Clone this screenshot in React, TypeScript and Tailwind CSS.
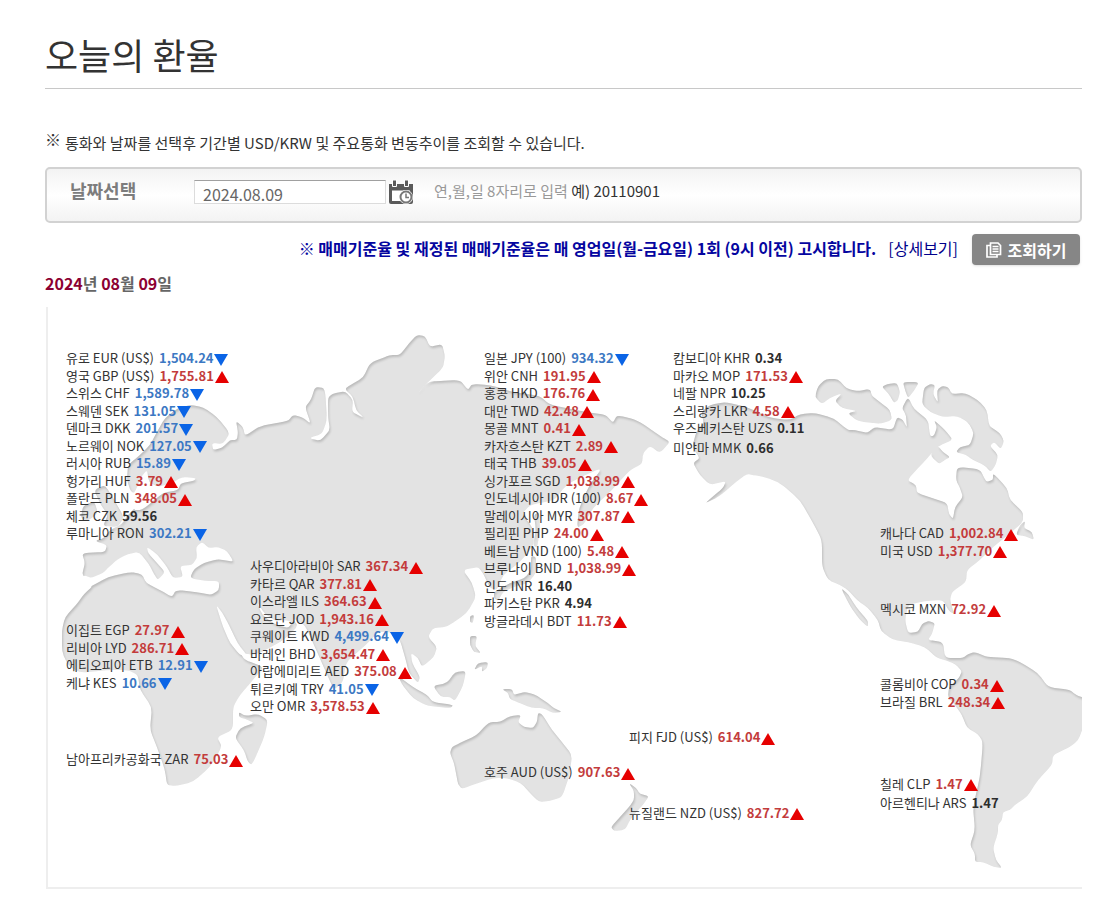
import { useState } from 'react';

type Trend = 'up' | 'down' | 'flat';
type Rate = [name: string, value: string, trend: Trend];

interface Region {
  x: number;
  y: number;
  rates: Rate[];
}

const MAP = { x: 48, y: 307, width: 1034, height: 580 };

const regions: Region[] = [
  {
    x: 66,
    y: 349,
    rates: [
      ['유로 EUR (US$)', '1,504.24', 'down'],
      ['영국 GBP (US$)', '1,755.81', 'up'],
      ['스위스 CHF', '1,589.78', 'down'],
      ['스웨덴 SEK', '131.05', 'down'],
      ['덴마크 DKK', '201.57', 'down'],
      ['노르웨이 NOK', '127.05', 'down'],
      ['러시아 RUB', '15.89', 'down'],
      ['헝가리 HUF', '3.79', 'up'],
      ['폴란드 PLN', '348.05', 'up'],
      ['체코 CZK', '59.56', 'flat'],
      ['루마니아 RON', '302.21', 'down'],
    ],
  },
  {
    x: 250,
    y: 557,
    rates: [
      ['사우디아라비아 SAR', '367.34', 'up'],
      ['카타르 QAR', '377.81', 'up'],
      ['이스라엘 ILS', '364.63', 'up'],
      ['요르단 JOD', '1,943.16', 'up'],
      ['쿠웨이트 KWD', '4,499.64', 'down'],
      ['바레인 BHD', '3,654.47', 'up'],
      ['아랍에미리트 AED', '375.08', 'up'],
      ['튀르키예 TRY', '41.05', 'down'],
      ['오만 OMR', '3,578.53', 'up'],
    ],
  },
  {
    x: 66,
    y: 621,
    rates: [
      ['이집트 EGP', '27.97', 'up'],
      ['리비아 LYD', '286.71', 'up'],
      ['에티오피아 ETB', '12.91', 'down'],
      ['케냐 KES', '10.66', 'down'],
    ],
  },
  { x: 66, y: 750, rates: [['남아프리카공화국 ZAR', '75.03', 'up']] },
  {
    x: 484,
    y: 349,
    rates: [
      ['일본 JPY (100)', '934.32', 'down'],
      ['위안 CNH', '191.95', 'up'],
      ['홍콩 HKD', '176.76', 'up'],
      ['대만 TWD', '42.48', 'up'],
      ['몽골 MNT', '0.41', 'up'],
      ['카자흐스탄 KZT', '2.89', 'up'],
      ['태국 THB', '39.05', 'up'],
      ['싱가포르 SGD', '1,038.99', 'up'],
      ['인도네시아 IDR (100)', '8.67', 'up'],
      ['말레이시아 MYR', '307.87', 'up'],
      ['필리핀 PHP', '24.00', 'up'],
      ['베트남 VND (100)', '5.48', 'up'],
      ['브루나이 BND', '1,038.99', 'up'],
      ['인도 INR', '16.40', 'flat'],
      ['파키스탄 PKR', '4.94', 'flat'],
      ['방글라데시 BDT', '11.73', 'up'],
    ],
  },
  {
    x: 673,
    y: 349,
    rates: [
      ['캄보디아 KHR', '0.34', 'flat'],
      ['마카오 MOP', '171.53', 'up'],
      ['네팔 NPR', '10.25', 'flat'],
      ['스리랑카 LKR', '4.58', 'up'],
      ['우즈베키스탄 UZS', '0.11', 'flat'],
    ],
  },
  { x: 673, y: 439, rates: [['미얀마 MMK', '0.66', 'flat']] },
  {
    x: 880,
    y: 524,
    rates: [
      ['캐나다 CAD', '1,002.84', 'up'],
      ['미국 USD', '1,377.70', 'up'],
    ],
  },
  { x: 880, y: 600, rates: [['멕시코 MXN', '72.92', 'up']] },
  {
    x: 880,
    y: 675,
    rates: [
      ['콜롬비아 COP', '0.34', 'up'],
      ['브라질 BRL', '248.34', 'up'],
    ],
  },
  { x: 880, y: 775, rates: [['칠레 CLP', '1.47', 'up']] },
  { x: 880, y: 794, rates: [['아르헨티나 ARS', '1.47', 'flat']] },
  { x: 629, y: 728, rates: [['피지 FJD (US$)', '614.04', 'up']] },
  { x: 484, y: 763, rates: [['호주 AUD (US$)', '907.63', 'up']] },
  { x: 629, y: 804, rates: [['뉴질랜드 NZD (US$)', '827.72', 'up']] },
];

// Coastlines, clockwise, one "x,y" pair per vertex
const lands = [
  // Europe, Asia and Africa
  '190,405 178,408 165,418 158,430 150,445 140,455 128,465 127,480 131,492 140,494 138,505 128,515 122,524 110,530 104,538 95,541 107,545 105,552 82,553 85,563 82,575 90,582 92,587 85,593 76,605 65,617 62,630 62,652 68,665 80,673 107,670 128,670 138,675 140,690 152,707 150,730 157,747 165,770 167,785 176,786 193,782 210,767 222,747 217,737 233,730 233,707 240,695 253,680 264,667 245,660 240,653 256,655 284,640 298,626 292,618 305,625 314,645 326,672 334,690 343,682 346,662 366,645 378,632 390,632 400,640 405,657 409,673 418,683 420,677 412,663 411,653 418,658 422,667 434,657 437,647 428,637 433,628 447,627 467,613 476,597 472,583 463,570 478,567 483,573 490,588 497,590 503,575 520,562 534,545 533,528 522,514 530,505 555,500 566,485 585,475 602,468 589,486 579,508 577,528 584,524 593,508 612,490 630,470 642,464 643,453 650,446 660,453 670,442 662,437 637,420 617,415 613,423 606,415 587,412 550,405 540,396 513,392 490,385 472,384 468,390 460,380 437,381 428,382 417,394 425,385 443,368 445,356 442,344 430,347 425,336 417,335 410,342 400,355 390,355 370,363 363,378 350,385 345,389 353,397 356,410 364,418 352,412 353,400 345,391 332,394 328,398 328,417 330,430 320,441 309,438 322,434 327,420 325,388 315,387 311,400 305,407 311,424 302,417 293,415 288,421 260,426 245,436 243,427 236,421 238,432 237,440 230,440 222,448 213,450 212,443 223,444 230,433 217,417 203,407',
  // Madagascar
  '239,712 245,716 258,714 268,720 264,738 252,765 248,762 244,750 235,738 240,728 254,723 248,720 239,717',
  // British Isles
  '94,490 105,485 113,498 124,517 118,527 103,526 108,515 101,505',
  '83,506 94,501 98,513 88,521 81,518',
  // Sumatra and Java
  '398,676 413,687 427,695 433,702 453,705 451,708 427,706 413,698 403,686',
  // Borneo
  '433,686 447,683 455,672 466,671 463,686 455,701 450,697 441,697',
  // Philippines and Sulawesi
  '470,636 477,636 475,646 481,653 474,652 470,645',
  '474,670 478,663 488,662 487,668 482,672 482,666',
  // Taiwan
  '470,616 474,615 473,623 470,622',
  // New Guinea
  '502,689 512,689 514,695 524,692 534,694 545,701 554,708 562,712 553,713 543,708 532,708 517,702 510,699 508,693',
  // Australia
  '450,753 452,747 460,743 477,735 484,727 490,722 500,722 510,716 521,715 518,722 524,727 533,728 537,722 538,713 542,714 552,730 562,742 572,755 570,772 568,780 562,797 550,801 539,802 530,793 521,783 507,778 494,778 475,784 462,789 458,784 456,773 454,763',
  // New Zealand
  '629,783 636,788 640,794 649,796 643,805 638,810 630,820 625,830 614,831 611,827 620,817 629,807 634,800 634,791',
  // Japan
  '494,592 510,583 525,578 531,570 531,556 536,557 536,573 528,583 514,587 503,592 498,601 494,598',
  '534,515 539,512 540,530 537,548 533,545 536,530',
  // The Americas
  '693,463 700,458 692,447 697,430 704,423 701,412 710,405 725,402 747,407 770,418 790,420 800,414 815,413 833,418 848,430 855,430 867,433 875,427 893,430 897,417 903,420 907,428 906,415 902,408 908,397 914,409 928,420 930,436 934,436 937,427 934,420 945,430 953,440 938,446 923,463 907,480 916,485 917,493 932,498 947,503 949,514 953,519 955,507 963,497 960,488 956,480 957,467 980,469 986,482 993,480 993,473 1007,488 1010,500 1023,512 1023,522 1007,536 993,547 980,560 967,570 966,582 952,592 950,600 954,614 949,611 943,600 925,601 908,605 905,620 908,633 918,632 922,624 928,621 935,623 932,634 928,640 943,642 945,658 963,658 968,654 975,652 987,657 1010,658 1020,662 1038,673 1048,687 1070,690 1076,695 1084,698 1084,725 1078,741 1068,748 1053,755 1052,765 1038,780 1027,797 1016,804 1010,810 1003,812 1002,820 998,825 998,833 993,848 996,860 1002,868 994,867 983,862 975,862 975,854 970,845 975,830 973,807 980,777 983,742 978,734 967,728 962,715 955,705 948,697 949,687 959,678 962,671 955,664 945,660 937,658 925,647 908,642 893,640 881,631 878,620 868,608 857,600 848,590 840,585 828,580 822,566 822,540 813,523 800,500 780,483 765,477 753,475 747,474 737,481 720,496 704,504 723,488 726,481 710,485 700,475',
  // Baja California
  '841,588 848,594 856,607 868,621 868,627 860,620 850,606',
  // Victoria and Banks
  '815,397 818,386 826,379 838,379 847,389 858,391 870,389 872,396 880,402 890,410 892,420 880,424 857,421 848,413 857,411 842,408 835,401 842,393 830,398 822,404',
  '882,387 887,384 897,383 900,392 898,400 894,403 889,394',
  '903,382 919,382 914,391 908,398 905,390',
  // Baffin
  '924,388 930,384 935,385 933,394 938,403 937,390 942,386 948,387 952,394 965,393 978,400 987,410 989,426 1000,433 1004,441 1001,449 994,442 990,446 998,455 996,464 991,472 984,465 973,460 966,455 956,452 960,447 970,445 974,433 968,422 957,416 943,417 930,412 922,404',
  // Southampton
  '931,456 932,450 938,446 943,452 950,457 945,460 939,464',
  // Newfoundland
  '1016,535 1020,525 1025,521 1024,528 1032,532 1034,540 1025,536',
];

// Inland waters cut out of the land
const seas = [
  // Mediterranean and Black Sea
  '74,583 84,575 91,578 103,573 110,566 118,559 128,554 139,552 149,564 154,574 158,580 165,572 156,562 148,553 147,547 157,554 167,567 173,578 183,577 180,566 192,565 197,558 196,547 202,542 209,548 218,547 227,551 234,562 218,559 204,563 194,569 190,578 205,581 219,581 219,590 211,595 197,592 176,590 172,597 160,590 146,583 142,574 130,572 108,577 92,586 78,592',
  // Red Sea
  '216,605 222,612 229,625 238,644 247,655 240,655 230,643 223,627',
  // Persian Gulf
  '257,602 265,614 276,621 284,620 293,622 288,628 276,625 262,615',
  // Baltic
  '130,498 136,490 141,477 147,470 149,482 158,487 172,483 182,477 196,478 194,481 181,483 178,490 163,493 152,502 142,510 134,510',
];

const CORNER = 0.3;

// Draws a closed polygon with every corner rounded off by a short curve
function coast(points: string) {
  const pts = points.split(' ').map((p) => p.split(',').map(Number));
  const toward = (a: number[], b: number[]) =>
    `${(a[0] + (b[0] - a[0]) * CORNER).toFixed(1)} ${(a[1] + (b[1] - a[1]) * CORNER).toFixed(1)}`;
  const parts = pts.map((p, i) => {
    const prev = pts[(i + pts.length - 1) % pts.length];
    const next = pts[(i + 1) % pts.length];
    return `${toward(p, prev)}Q${p[0]} ${p[1]} ${toward(p, next)}`;
  });
  return `M${parts.join('L')}Z`;
}

function WorldMap() {
  return (
    <svg
      viewBox={`${MAP.x} ${MAP.y} ${MAP.width} ${MAP.height}`}
      className="block w-full h-auto"
      aria-hidden="true"
    >
      <defs>
        <filter id="emboss" x="-5%" y="-5%" width="110%" height="110%">
          <feComponentTransfer in="SourceAlpha" result="outside">
            <feFuncA type="linear" slope="-1" intercept="1" />
          </feComponentTransfer>
          <feGaussianBlur in="outside" stdDeviation="1.3" />
          <feOffset dx="1" dy="1.5" result="edge" />
          <feFlood floodColor="#999" floodOpacity="0.6" />
          <feComposite in2="edge" operator="in" />
          <feComposite in2="SourceAlpha" operator="in" result="shade" />
          <feMerge result="land">
            <feMergeNode in="SourceGraphic" />
            <feMergeNode in="shade" />
          </feMerge>
          <feGaussianBlur in="land" stdDeviation="0.4" />
        </filter>
        <mask id="water" maskUnits="userSpaceOnUse" x="0" y="300" width="1100" height="600">
          <rect x="0" y="300" width="1100" height="600" fill="#fff" />
          {seas.map((s) => (
            <path key={s} d={coast(s)} fill="#000" />
          ))}
        </mask>
      </defs>
      <g filter="url(#emboss)">
        <g mask="url(#water)" fill="#e3e3e3">
          {lands.map((l) => (
            <path key={l} d={coast(l)} />
          ))}
        </g>
      </g>
    </svg>
  );
}

function TrendMark({ trend }: { trend: Trend }) {
  if (trend === 'flat') return null;
  return (
    <svg viewBox="0 0 14 12" className="w-[14px] h-[12px] ml-[1px] mt-[3px]" role="img" aria-label={trend === 'up' ? '상승' : '하락'}>
      {trend === 'up' ? <path d="M7 0L14 12H0Z" fill="#e60000" /> : <path d="M0 0H14L7 12Z" fill="#0a64e6" />}
    </svg>
  );
}

const trendColor = {
  up: 'text-[#c33c3c]',
  down: 'text-[#3c78c3]',
  flat: 'text-[#2d2d2d]',
};

function RateList({ region }: { region: Region }) {
  return (
    <ul
      className="absolute whitespace-nowrap text-[13px] leading-[16px]"
      style={{
        left: `${((region.x - MAP.x) / MAP.width) * 100}%`,
        top: `${((region.y - MAP.y) / MAP.height) * 100}%`,
      }}
    >
      {region.rates.map(([name, value, trend]) => (
        <li key={name} className="flex items-center h-[18px] even:h-[17px]">
          <span className="block h-[16px] text-[#333]">{name}</span>
          <strong className={`block h-[16px] ml-[5px] font-bold ${trendColor[trend]}`}>{value}</strong>
          <TrendMark trend={trend} />
        </li>
      ))}
    </ul>
  );
}

function CalendarIcon() {
  return (
    <svg viewBox="0 0 24 24" className="w-6 h-6" aria-hidden="true">
      <path d="M0 4h24v18a2 2 0 0 1-2 2H2a2 2 0 0 1-2-2z" fill="#5a5a5a" />
      <path d="M3.500 0h4v6.500h-4zM15.500 0h4v6.500h-4z" fill="#5a5a5a" stroke="#fff" />
      <path d="M3 10.500h18V21H3z" fill="#fff" />
      <circle cx="17" cy="17" r="7" fill="#fff" />
      <circle cx="17" cy="17" r="5.500" fill="#fff" stroke="#777" strokeWidth="2" />
      <path d="M17 13.500v4h3" fill="none" stroke="#777" strokeWidth="1.500" />
    </svg>
  );
}

function PagesIcon() {
  return (
    <svg viewBox="0 0 16 16" className="w-4 h-4" fill="none" stroke="#fff" strokeWidth="1.700" aria-hidden="true">
      <path d="M4 3.500H1V15h10v-2" />
      <path d="M4.500 1H12l2.500 2.500V12.500h-10z" />
      <path d="M6.500 4.500h6M6.500 7h6M6.500 9.500h6" />
    </svg>
  );
}

export default function App() {
  const [date, setDate] = useState('2024.08.09');

  return (
    <main className="bg-white pl-[45px] pr-[18px] pt-[27px] pb-2 font-['Noto_Sans_CJK_KR','Noto_Sans',sans-serif] text-[#333]">
      <h1 className="h-[62px] border-b border-[#c8c8c8] text-[36px] leading-[54px]">오늘의 환율</h1>

      <p className="mt-[43px] flex items-center h-[22px] gap-1 text-[15px]">
        <strong className="text-[16px] mb-2">※</strong>
        통화와 날짜를 선택후 기간별 USD/KRW 및 주요통화 변동추이를 조회할 수 있습니다.
      </p>

      <form id="rate-search" className="mt-[13px] h-[56px] flex items-center pl-[23px] pb-[6px] rounded-[5px] border-2 border-[#d2d2d2] bg-linear-to-b from-[#f3f3f3] via-white to-[#f3f3f3]" onSubmit={(e) => e.preventDefault()}>
        <label htmlFor="date" className="w-[124px] pb-1 text-[18px] font-bold text-[#7d7d7d]">
          날짜선택
        </label>
        <input
          id="date"
          type="text"
          value={date}
          onChange={(e) => setDate(e.target.value)}
          className="w-[192px] h-6 pl-2 pt-1 bg-white border border-[#dcdcdc] border-t-[#a0a0a0] text-[16px] text-[#666]"
        />
        <button type="button" aria-label="달력" className="ml-[3px]">
          <CalendarIcon />
        </button>
        <span className="ml-[21px] pb-[2px] text-[15px] text-[#999]">
          연,월,일 8자리로 입력 <span className="text-[#333]">예) 20110901</span>
        </span>
      </form>

      <div className="mt-[11px] mr-[2px] flex items-center justify-end text-[#00008b]">
        <p className="pb-1 text-[16px]">
          <strong className="text-[#0505a0]">
            ※ 매매기준율 및 재정된 매매기준율은 매 영업일(월-금요일) 1회 (9시 이전) 고시합니다.
          </strong>
          <a href="#detail" className="ml-3">
            [상세보기]
          </a>
        </p>
        <button form="rate-search" type="submit" className="ml-[14px] h-[31px] w-[108px] flex items-center justify-center gap-[6px] rounded-[4px] bg-[#868686] shadow-sm text-[16px] font-bold text-white">
          <PagesIcon />
          조회하기
        </button>
      </div>

      <h2 className="mt-[6px] text-[16px] leading-6 font-bold text-[#666]">
        <span className="text-[#8c0032]">2024</span>년 <span className="text-[#8c0032]">08</span>월 <span className="text-[#8c0032]">09</span>일
      </h2>

      <section className="relative mt-3 ml-[1px] border-l-2 border-b-2 border-[#eee]">
        <WorldMap />
        {regions.map((region) => (
          <RateList key={region.rates[0][0]} region={region} />
        ))}
      </section>
    </main>
  );
}
